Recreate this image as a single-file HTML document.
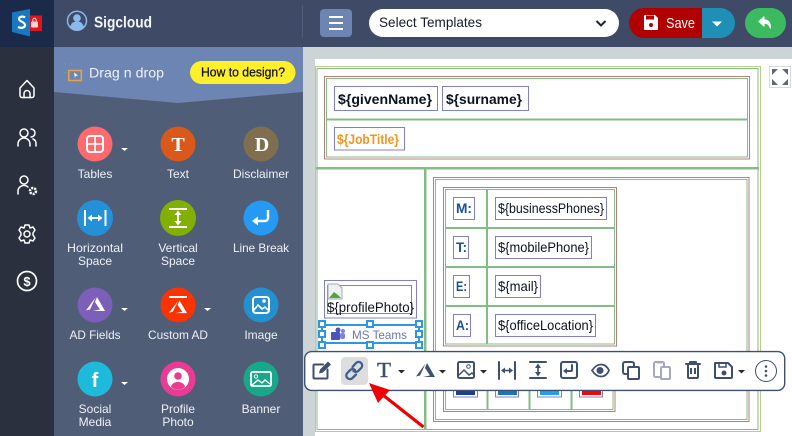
<!DOCTYPE html>
<html>
<head>
<meta charset="utf-8">
<style>
html,body{margin:0;padding:0;background:#fff;width:792px;height:436px;overflow:hidden}
svg{display:block}
text{font-family:"Liberation Sans",sans-serif}
.l{font-size:12px;fill:#eef2f7;text-anchor:middle}
.t{font-size:14px;fill:#0b1220}
.b{font-weight:bold}
.k{font-size:14px;font-weight:bold;fill:#1a4f96}
.bx{fill:#fff;stroke:#8080c4;stroke-width:1}
.gr{fill:none;stroke:#84bd84}
.rd{fill:none;stroke:#b97c7c}
.i{fill:none;stroke:#fff;stroke-width:1.5;stroke-linecap:round;stroke-linejoin:round}
.tb{fill:none;stroke:#3e4f73;stroke-width:2;stroke-linejoin:round;stroke-linecap:round}
.tf{fill:#3e4f73}
.h{fill:#fff;stroke:#2d96e6;stroke-width:2}
</style>
</head>
<body>
<svg width="792" height="436" viewBox="0 0 792 436" xmlns="http://www.w3.org/2000/svg">
<!-- backgrounds -->
<rect width="792" height="436" fill="#fff"/>
<rect x="303" y="47" width="489" height="12" fill="#ccd4d6"/>
<rect x="303" y="47" width="12" height="389" fill="#ccd4d6"/>
<rect x="0" y="0" width="54" height="436" fill="#2a303e"/>
<rect x="0" y="0" width="54" height="47" fill="#1b2a49"/>
<rect x="54" y="0" width="738" height="47" fill="#3e4a66"/>
<rect x="54" y="47" width="249" height="389" fill="#4f5d77"/>
<polygon points="54,47 303,47 303,92 178,103 54,92" fill="#6d85b3"/>
<rect x="302" y="5" width="1" height="33" fill="#4f5d7a"/>

<!-- logo -->
<polygon points="12,12.500 30,9 30,36.500 12,32" fill="#1a78c2"/>
<path d="M25 17.500c-2-1.500-6-1-6 1.500s6 3 6 6-4 3.500-7 2" fill="none" stroke="#fff" stroke-width="2.200"/>
<rect x="30" y="15.500" width="12" height="15.500" fill="#e0141c"/>
<rect x="31" y="21.500" width="7" height="6" rx="1" fill="#fcd5d5"/>
<path d="M32.800 21.500v-1.500a1.700 1.700 0 0 1 3.400 0v1.500" fill="none" stroke="#fcd5d5" stroke-width="1"/>

<!-- header -->
<circle cx="77" cy="20.700" r="9.500" fill="none" stroke="#8db8ea" stroke-width="1.500"/>
<circle cx="77" cy="18" r="3.800" fill="#8db8ea"/>
<path d="M70 27.500c1-5 4-6 7-6s6 1 7 6a10 10 0 0 1-14 0z" fill="#8db8ea"/>
<text x="94" y="27.500" font-size="16" font-weight="bold" fill="#f2f6fb" textLength="58" lengthAdjust="spacingAndGlyphs">Sigcloud</text>

<rect x="320" y="9" width="32" height="28" rx="4" fill="#6d85b3"/>
<rect x="329" y="16" width="14" height="2" fill="#fff"/><rect x="329" y="22" width="14" height="2" fill="#fff"/><rect x="329" y="28" width="14" height="2" fill="#fff"/>

<rect x="369" y="9" width="250" height="28" rx="14" fill="#fff"/>
<text x="379" y="27" font-size="14" fill="#141a28" textLength="103" lengthAdjust="spacingAndGlyphs">Select Templates</text>
<path d="M596.500 21l4.500 4.500 4.500-4.500" fill="none" stroke="#1f2533" stroke-width="2"/>

<path d="M702 8H644a15 15 0 0 0 0 30h58z" fill="#b00000"/>
<path d="M702 8h18a15 15 0 0 1 0 30h-18z" fill="#1f8fb5"/>
<path d="M645 15h10l3 3v11a1 1 0 0 1-1 1h-12a1 1 0 0 1-1-1V16a1 1 0 0 1 1-1z" fill="#fff"/>
<rect x="646" y="15.500" width="8" height="4" fill="#b00000"/>
<circle cx="651" cy="25" r="2" fill="#b00000"/>
<text x="666" y="28" font-size="15" fill="#fff" textLength="29" lengthAdjust="spacingAndGlyphs">Save</text>
<polygon points="712,21.500 722,21.500 717,26.500" fill="#fff"/>
<rect x="745" y="8" width="41" height="30" rx="15" fill="#3cba60"/>
<path d="M764 17l-5 4.500 5 4.500v-3c3 0 5 1 6.500 5 0-5-2-8-6.500-8z" fill="#fff" stroke="#fff" stroke-width="1.200" stroke-linejoin="round"/>

<!-- rail icons -->
<path class="i" d="M20 88l7-7.500 7 7.500v7.500a2 2 0 0 1-2 2H22a2 2 0 0 1-2-2z"/>
<path class="i" d="M24 97.500v-4a3 3 0 0 1 6 0v4"/>
<circle class="i" cx="24" cy="133" r="4"/>
<path class="i" d="M18 146v-2a6 6 0 0 1 12 0v2"/>
<path class="i" d="M31 129a4 4 0 0 1 0 8M33 139a5 5 0 0 1 3 5v2"/>
<circle class="i" cx="24" cy="180" r="4"/>
<path class="i" d="M18 194v-2a6 6 0 0 1 10-5"/>
<circle cx="33" cy="191" r="3" fill="none" stroke="#fff" stroke-width="2.500" stroke-dasharray="2 1"/>
<circle class="i" cx="27" cy="234" r="3"/>
<path class="i" d="M25 225h4l1 3 3-1 2 3-2 3v2l2 3-2 3-3-1-1 3h-4l-1-3-3 1-2-3 2-3v-2l-2-3 2-3 3 1z"/>
<circle cx="27" cy="281" r="9.500" fill="none" stroke="#fff" stroke-width="1.700"/>
<text x="27" y="286" font-size="13" font-weight="bold" fill="#fff" text-anchor="middle">$</text>

<!-- drag n drop -->
<rect x="68.800" y="70.500" width="12.500" height="10" fill="none" stroke="#e8a04e" stroke-width="1.600"/>
<path d="M65 64h1M71 64h1M77 64h1M65 72v1" stroke="#3fd14a" stroke-width="1.200" fill="none"/>
<polygon points="74,72.500 78,75.500 75.500,76 75,78.500" fill="#fff"/>
<text x="89" y="77.500" font-size="14" fill="#eef2f8" textLength="75" lengthAdjust="spacingAndGlyphs">Drag n drop</text>
<rect x="190" y="61" width="105.500" height="23" rx="11.500" fill="#fff02a"/>
<text x="201" y="76.500" font-size="13" fill="#14141c" stroke="#14141c" stroke-width=".3" textLength="84" lengthAdjust="spacingAndGlyphs">How to design?</text>

<!-- row 1 -->
<circle cx="95" cy="144" r="17.500" fill="#ff6a6e"/>
<rect x="87" y="136" width="16" height="16" rx="3" fill="none" stroke="#fff" stroke-width="2"/>
<path d="M95 136v16M87 144h16" stroke="#fff" stroke-width="1.600"/>
<polygon points="121,148 128,148 124.500,151" fill="#fff"/>
<text class="l" x="95" y="178">Tables</text>
<circle cx="178" cy="144" r="17.500" fill="#d9581a"/>
<text x="178" y="151" font-size="20" font-weight="bold" fill="#fff" text-anchor="middle" style="font-family:'Liberation Serif',serif">T</text>
<text class="l" x="178" y="178">Text</text>
<circle cx="261" cy="144" r="17.500" fill="#7f6f4f"/>
<text x="262" y="151" font-size="20" font-weight="bold" fill="#fff" text-anchor="middle" style="font-family:'Liberation Serif',serif">D</text>
<text class="l" x="261" y="178" textLength="56" lengthAdjust="spacingAndGlyphs">Disclaimer</text>

<!-- row 2 -->
<circle cx="95" cy="218" r="18" fill="#2490d8"/>
<path d="M85 210v16M105.500 210v16" stroke="#fff" stroke-width="2"/>
<path d="M89 218h12" stroke="#fff" stroke-width="2"/>
<polygon points="87.500,218 92,214.500 92,221.500" fill="#fff"/><polygon points="102.500,218 98,214.500 98,221.500" fill="#fff"/>
<text class="l" x="95" y="252" textLength="56" lengthAdjust="spacingAndGlyphs">Horizontal</text>
<text class="l" x="95" y="265">Space</text>
<circle cx="178" cy="218" r="18" fill="#82b000"/>
<path d="M169 209h18M169 227h18M178 212v12" stroke="#fff" stroke-width="2"/>
<polygon points="178,210.500 174.500,215 181.500,215" fill="#fff"/><polygon points="178,225.500 174.500,221 181.500,221" fill="#fff"/>
<text class="l" x="178" y="252">Vertical</text>
<text class="l" x="178" y="265">Space</text>
<circle cx="261" cy="218" r="17.500" fill="#2699f2"/>
<path d="M268 210v8a3 3 0 0 1-3 3h-11" fill="none" stroke="#fff" stroke-width="2.400"/>
<polygon points="252,221 258,216.500 258,225.500" fill="#fff"/>
<text class="l" x="261" y="252" textLength="56" lengthAdjust="spacingAndGlyphs">Line Break</text>

<!-- row 3 -->
<circle cx="95" cy="305" r="17.500" fill="#7c5fb8"/>
<g transform="translate(86,297)" fill="#fff"><path d="M9.500 .5L7.500 5 4 12.500 0 13.500z"/><path d="M11 0l8 14H7l7-1.500L9 5z"/></g>
<polygon points="121,308 128,308 124.500,311" fill="#fff"/>
<text class="l" x="95" y="339" textLength="51" lengthAdjust="spacingAndGlyphs">AD Fields</text>
<circle cx="178" cy="305" r="17.500" fill="#fb3300"/>
<rect x="169" y="296" width="18" height="2" fill="#fff"/>
<g transform="translate(169,300.500) scale(.95,.9)" fill="#fff"><path d="M9.500 .5L7.500 5 4 12.500 0 13.500z"/><path d="M11 0l8 14H7l7-1.500L9 5z"/></g>
<polygon points="204,308 211,308 207.500,311" fill="#fff"/>
<text class="l" x="178" y="339" textLength="60" lengthAdjust="spacingAndGlyphs">Custom AD</text>
<circle cx="261" cy="305" r="17.500" fill="#2490d0"/>
<rect x="253" y="297" width="16" height="16" rx="3" fill="none" stroke="#fff" stroke-width="2"/>
<circle cx="264" cy="301" r="1.800" fill="#fff"/>
<path d="M254 310l4-5 4 4 3-2 3 3" fill="none" stroke="#fff" stroke-width="1.600"/>
<text class="l" x="261" y="339">Image</text>

<!-- row 4 -->
<circle cx="95" cy="379" r="17.500" fill="#1ebadb"/>
<text x="95" y="387" font-size="20" font-weight="bold" fill="#fff" text-anchor="middle">f</text>
<polygon points="121,382 128,382 124.500,385" fill="#fff"/>
<text class="l" x="95" y="413">Social</text>
<text class="l" x="95" y="426">Media</text>
<circle cx="178" cy="379" r="17.500" fill="#ea3a93"/>
<circle cx="178" cy="379" r="11" fill="#fff"/>
<circle cx="178" cy="376" r="3.800" fill="#ea3a93"/>
<path d="M171 387c1-4 4-5 7-5s6 1 7 5a10 10 0 0 1-14 0z" fill="#ea3a93"/>
<text class="l" x="178" y="413">Profile</text>
<text class="l" x="178" y="426">Photo</text>
<circle cx="261" cy="379" r="17.500" fill="#16a888"/>
<rect x="251" y="372" width="20" height="14" rx="1.500" fill="none" stroke="#fff" stroke-width="1.800"/>
<circle cx="256" cy="376.500" r="1.700" fill="none" stroke="#fff"/>
<path d="M252 385l6-5 4 3 3-3 5 4" fill="none" stroke="#fff" stroke-width="1.400"/>
<text class="l" x="261" y="413">Banner</text>

<!-- canvas -->
<rect x="315" y="59" width="477" height="377" fill="#fff"/>
<rect x="315.500" y="66.500" width="445" height="365" fill="#fff" stroke="#b9cd8a"/>
<rect x="317" y="68.500" width="441" height="361" class="gr"/>
<rect x="316" y="167" width="443" height="2.500" fill="#84bd84"/>
<rect x="424" y="168" width="2.500" height="262" fill="#84bd84"/>

<rect x="324.500" y="76.500" width="425" height="82.500" class="rd"/>
<rect x="326.500" y="78.500" width="421" height="78.500" class="gr"/>
<rect x="326" y="118.500" width="422" height="2" fill="#84bd84"/>
<rect x="334.500" y="86.500" width="103" height="24" class="bx"/>
<text class="t b" x="338" y="104" textLength="94" lengthAdjust="spacingAndGlyphs">${givenName}</text>
<rect x="442.500" y="86.500" width="86" height="24" class="bx"/>
<text class="t b" x="446" y="104" textLength="76" lengthAdjust="spacingAndGlyphs">${surname}</text>
<rect x="334.500" y="127.500" width="70" height="22.500" class="bx"/>
<text x="337" y="144" font-size="13.500" font-weight="bold" fill="#f7931e" textLength="62" lengthAdjust="spacingAndGlyphs">${JobTitle}</text>

<rect x="433.500" y="177.500" width="315.500" height="244" class="rd"/>
<rect x="435.500" y="179.500" width="311.500" height="240" class="gr"/>

<!-- details table -->
<rect x="443.500" y="187.500" width="173" height="158.500" class="rd"/>
<rect x="445.500" y="189.500" width="169" height="154.500" class="gr"/>
<rect x="446" y="227" width="169" height="2" fill="#84bd84"/>
<rect x="446" y="266" width="169" height="2" fill="#84bd84"/>
<rect x="446" y="305" width="169" height="2" fill="#84bd84"/>
<rect x="486" y="190" width="2" height="154" fill="#84bd84"/>

<rect x="453.500" y="197.500" width="21" height="22" class="bx"/><text class="k" x="456" y="213" textLength="16" lengthAdjust="spacingAndGlyphs">M:</text>
<rect x="495.500" y="197.500" width="111" height="22" class="bx"/><text class="t" x="498" y="213" textLength="106" lengthAdjust="spacingAndGlyphs">${businessPhones}</text>
<rect x="453.500" y="236.500" width="15" height="22" class="bx"/><text class="k" x="456" y="252" textLength="11" lengthAdjust="spacingAndGlyphs">T:</text>
<rect x="495.500" y="236.500" width="96" height="22" class="bx"/><text class="t" x="498" y="252" textLength="91" lengthAdjust="spacingAndGlyphs">${mobilePhone}</text>
<rect x="453.500" y="275.500" width="16" height="22" class="bx"/><text class="k" x="456" y="291" textLength="11" lengthAdjust="spacingAndGlyphs">E:</text>
<rect x="495.500" y="275.500" width="45" height="22" class="bx"/><text class="t" x="498" y="291" textLength="40" lengthAdjust="spacingAndGlyphs">${mail}</text>
<rect x="453.500" y="314.500" width="17" height="22" class="bx"/><text class="k" x="456" y="330" textLength="13" lengthAdjust="spacingAndGlyphs">A:</text>
<rect x="495.500" y="314.500" width="100" height="22" class="bx"/><text class="t" x="498" y="330" textLength="95" lengthAdjust="spacingAndGlyphs">${officeLocation}</text>

<!-- social row (mostly behind toolbar) -->
<rect x="443.500" y="355" width="171.500" height="56.500" class="rd"/>
<rect x="445.500" y="355" width="167.500" height="54.500" class="gr"/>
<rect x="486.500" y="355" width="2" height="55" fill="#84bd84"/>
<rect x="528.500" y="355" width="2" height="55" fill="#84bd84"/>
<rect x="570.500" y="355" width="2" height="55" fill="#84bd84"/>
<rect x="453.500" y="380.500" width="24" height="16.500" class="bx"/><rect x="456" y="388" width="19" height="7" fill="#1a3f8f"/>
<rect x="495.500" y="380.500" width="23" height="16.500" class="bx"/><rect x="498" y="388" width="19" height="7" fill="#1b75bb"/>
<rect x="537.500" y="380.500" width="24" height="16.500" class="bx"/><rect x="540" y="388" width="19" height="7" fill="#1da1f2"/>
<rect x="579.500" y="380.500" width="23" height="16.500" class="bx"/><rect x="582" y="388" width="19" height="7" fill="#f00"/>

<!-- profile photo -->
<rect x="324.500" y="280.500" width="92" height="37.500" class="bx"/>
<rect x="327.500" y="285.500" width="84" height="28" class="bx"/>
<path d="M328 284h10l4 4v11h-14z" fill="#eef1f4" stroke="#a4aab4"/>
<path d="M329 298l5-6 4 3 3 3z" fill="#4fa83d"/>
<text class="t" x="327" y="312" textLength="87" lengthAdjust="spacingAndGlyphs">${profilePhoto}</text>

<!-- MS Teams -->
<rect x="322" y="325" width="97" height="18" fill="#fff" stroke="#2d96e6" stroke-width="2"/>
<rect x="331" y="332" width="9" height="8" rx="1" fill="#4b53bc"/>
<circle cx="338" cy="330" r="2.500" fill="#4b53bc"/><circle cx="343" cy="331" r="2" fill="#7b83eb"/>
<rect x="340" y="333" width="5" height="6" rx="2" fill="#7b83eb"/>
<text x="352" y="339" font-size="12" fill="#6a78a8" textLength="55" lengthAdjust="spacingAndGlyphs">MS Teams</text>
<g class="h">
<rect x="319" y="321" width="6" height="6"/><rect x="367" y="321" width="6" height="6"/><rect x="416" y="321" width="6" height="6"/>
<rect x="319" y="331" width="6" height="6"/><rect x="416" y="331" width="6" height="6"/>
<rect x="319" y="342" width="6" height="6"/><rect x="367" y="342" width="6" height="6"/><rect x="416" y="342" width="6" height="6"/>
</g>

<!-- toolbar -->
<rect x="304.700" y="351.600" width="480" height="38.800" rx="7" fill="#fff" stroke="#3e4f73" stroke-width="1.400"/>
<path class="tb" d="M323 364.500h-8.500a1 1 0 0 0-1 1v12a1 1 0 0 0 1 1h12a1 1 0 0 0 1-1v-8"/>
<path d="M319 373.500l1-4 8-8 3 3-8 8z" fill="#3e4f73"/>
<rect x="341" y="357" width="27" height="28" rx="4" fill="#dddddd"/>
<path d="M352.500 367l3.500-4a3.600 3.600 0 0 1 5.200 5l-3 3a3.600 3.600 0 0 1-4.700 0" fill="none" stroke="#3e5f92" stroke-width="2.300" stroke-linecap="round"/>
<path d="M356 374.500l-3.500 3.500a3.600 3.600 0 0 1-5.200-5l3-3a3.600 3.600 0 0 1 4.700 0" fill="none" stroke="#3e5f92" stroke-width="2.300" stroke-linecap="round"/>
<text x="377" y="377" font-size="21" fill="#3e4f73" stroke="#3e4f73" stroke-width=".4" style="font-family:'Liberation Serif',serif" textLength="14" lengthAdjust="spacingAndGlyphs">T</text>
<polygon points="398,370 405,370 401.500,373.500" fill="#2a2a2a"/>
<g transform="translate(416,363)" class="tf"><path d="M9.500 .5L7.500 5 4 12.500 0 13.500z"/><path d="M11 0l8 14H7l7-1.500L9 5z"/></g>
<polygon points="439,370 446,370 442.500,373.500" fill="#2a2a2a"/>
<rect x="458" y="362" width="16" height="16" rx="1.500" class="tb"/>
<circle cx="468.500" cy="366.500" r="1.800" fill="none" stroke="#3e4f73"/>
<path d="M459 375l5-5 5 5 3-2 2 2" fill="none" stroke="#3e4f73" stroke-width="1.500"/>
<polygon points="480,370 487,370 483.500,373.500" fill="#2a2a2a"/>
<path class="tb" d="M499 362v17M515 362v17"/>
<path d="M502 370.500h10" stroke="#3e4f73" stroke-width="1.600"/>
<polygon points="501,370.500 505,367.500 505,373.500" class="tf"/><polygon points="513,370.500 509,367.500 509,373.500" class="tf"/>
<path class="tb" d="M530 362h16M530 378h16"/>
<path d="M538 365v10" stroke="#3e4f73" stroke-width="1.600"/>
<polygon points="538,363.500 535,368 541,368" class="tf"/><polygon points="538,376.500 535,372 541,372" class="tf"/>
<rect x="561" y="362" width="16" height="16" rx="2" class="tb"/>
<path class="tb" d="M572 365v5a1 1 0 0 1-1 1h-6"/>
<polygon points="563,371 567,368 567,374" class="tf"/>
<path d="M592 370.500c3-4.500 6-6 9-6s6 1.500 8 6c-2 4.500-5 6-8 6s-6-1.500-9-6z" fill="none" stroke="#3e4f73" stroke-width="1.700"/>
<circle cx="600" cy="370.500" r="3.500" class="tf"/>
<rect x="623" y="362" width="11" height="12" rx="2" fill="none" stroke="#3e4f73" stroke-width="2"/>
<rect x="628" y="367" width="11" height="12" rx="1" fill="#fff" stroke="#3e4f73" stroke-width="2"/>
<rect x="654" y="362" width="10" height="15" rx="1.500" fill="none" stroke="#a4aabb" stroke-width="2"/>
<rect x="657" y="361" width="5" height="2.500" fill="#a4aabb"/>
<rect x="661" y="367" width="9" height="12" rx="1" fill="#fff" stroke="#a4aabb" stroke-width="2"/>
<path class="tb" d="M686 364h14M690 364v-2h6v2M688 364v13a1 1 0 0 0 1 1h8a1 1 0 0 0 1-1v-13"/>
<path d="M691 368v6M695 368v6" stroke="#3e4f73" stroke-width="2"/>
<path class="tb" d="M716 363h12l4 4v10a1 1 0 0 1-1 1h-15a1 1 0 0 1-1-1v-14z"/>
<path d="M719 363v4h7v-4" fill="none" stroke="#3e4f73" stroke-width="1.500"/>
<circle cx="724" cy="373" r="2.500" class="tf"/>
<polygon points="738,370 745,370 741.500,373.500" fill="#2a2a2a"/>
<circle cx="766" cy="371" r="10.500" fill="none" stroke="#3e4f73" stroke-width="1"/>
<circle cx="766" cy="366.500" r="1.300" class="tf"/><circle cx="766" cy="371" r="1.300" class="tf"/><circle cx="766" cy="375.500" r="1.300" class="tf"/>

<!-- arrow -->
<path d="M423.500 427L381 393.500" stroke="#f00000" stroke-width="3.200"/>
<polygon points="369,383 390,390 378,403" fill="#f00000"/>

<!-- expand -->
<rect x="769.500" y="66.500" width="21" height="21" fill="#fff" stroke="#d5dade"/>
<g fill="#5f6878">
<polygon points="772,69 778,69 772,75"/><polygon points="788,69 782,69 788,75"/>
<polygon points="772,85 778,85 772,79"/><polygon points="788,85 782,85 788,79"/>
</g>
</svg>
</body>
</html>
